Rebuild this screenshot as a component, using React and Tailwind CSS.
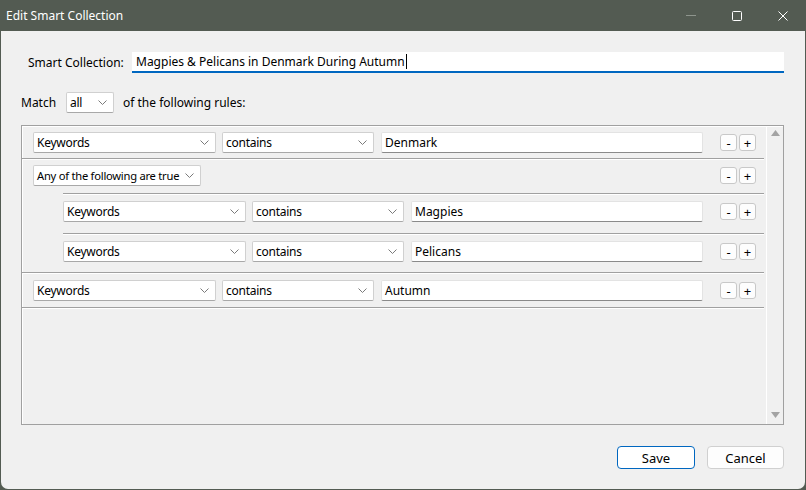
import React from 'react';

const FONT = { fontFamily: '"Noto Sans", "Open Sans", sans-serif' };

const Chevron = () => (
  <svg width="9" height="5" viewBox="0 0 9 5" className="shrink-0">
    <path d="M0.5 0.5 L4.5 4.5 L8.5 0.5" fill="none" stroke="#7a7a7a" strokeWidth="1" />
  </svg>
);

const Select = ({ value, w, small }) => (
  <div
    className="h-[21px] bg-white border border-[#d0d0d0] border-b-[#a8a8a8] rounded-[2px] flex items-center justify-between pl-[3px] pr-[6px] shrink-0"
    style={{ width: w }}
  >
    <span className={`${small ? 'text-[11.2px]' : 'text-[12px]'} text-black leading-[16px] whitespace-nowrap tracking-[-0.25px]`}>{value}</span>
    <Chevron />
  </div>
);

const TextBox = ({ value }) => (
  <div className="flex-1 h-[21px] bg-white border border-[#e3e3e3] border-b-[#8a8a8a] rounded-[2px] flex items-center pl-[3px]">
    <span className="text-[12px] text-black leading-[16px]">{value}</span>
  </div>
);

const MiniBtn = ({ label }) => (
  <div className="w-[17px] h-[17px] shrink-0 bg-[#fdfdfd] border border-[#c8c8c8] rounded-[3px] flex items-center justify-center text-[13px] leading-[16px] text-black">
    {label}
  </div>
);

const Buttons = () => (
  <div className="flex gap-[2px] ml-[17px] shrink-0">
    <MiniBtn label="-" />
    <MiniBtn label="+" />
  </div>
);

const Rule = ({ value, nested }) => (
  <div className={`flex items-center h-[21px] pr-[8px] ${nested ? '' : 'pl-[11px]'}`}>
    <Select value="Keywords" w={183} />
    <div className="ml-[6px]"><Select value="contains" w={152} /></div>
    <div className="ml-[7px] flex-1 flex"><TextBox value={value} /></div>
    <Buttons />
  </div>
);

const Sep = 'border-b border-[#a0a0a0] shadow-[0_1px_0_#ffffff]';

export default function App() {
  return (
    <div className="w-[806px] h-[490px] bg-[#535b52] flex flex-col overflow-hidden" style={FONT}>
      {/* ── Title bar ───────────────────────────── */}
      <div className="h-[31px] flex items-center shrink-0 pl-[6px]">
        <span className="text-[12px] text-white leading-[16px]">Edit Smart Collection</span>
        <div className="ml-auto flex items-center h-full">
          <div className="w-[46px] h-full flex items-center justify-center">
            <svg width="10" height="1" viewBox="0 0 10 1"><rect width="10" height="1" fill="#8e958d" /></svg>
          </div>
          <div className="w-[46px] h-full flex items-center justify-center">
            <svg width="10" height="10" viewBox="0 0 10 10">
              <rect x="0.5" y="0.5" width="9" height="9" rx="1" fill="none" stroke="#ffffff" strokeWidth="1" />
            </svg>
          </div>
          <div className="w-[46px] h-full flex items-center justify-center">
            <svg width="10" height="10" viewBox="0 0 10 10">
              <path d="M0.5 0.5 L9.5 9.5 M9.5 0.5 L0.5 9.5" stroke="#ffffff" strokeWidth="1" />
            </svg>
          </div>
        </div>
      </div>

      {/* ── Body ────────────────────────────────── */}
      <div className="flex-1 mx-[1px] mb-[1px] bg-[#f0f0f0] rounded-b-[7px] flex flex-col pl-[20px] pr-[21px]">
        <div className="flex items-center mt-[21px] h-[21px]">
          <span className="text-[12px] text-black leading-[16px] ml-[7px] w-[104px]">Smart Collection:</span>
          <div className="flex-1 h-[21px] bg-white border-b-2 border-[#0067c0] flex items-center pl-[4px]">
            <span className="text-[12px] text-black leading-[16px]">Magpies &amp; Pelicans in Denmark During Autumn</span>
            <span className="w-px h-[15px] bg-black ml-[1px]" />
          </div>
        </div>

        <div className="flex items-center mt-[19px] h-[21px]">
          <span className="text-[12px] text-black leading-[16px] w-[45px]">Match</span>
          <Select value="all" w={48} />
          <span className="text-[12px] text-black leading-[16px] ml-[9px]">of the following rules:</span>
        </div>

        {/* ── Rules panel ───────────────────────── */}
        <div className="mt-[12px] h-[300px] border border-[#a0a0a0] shadow-[inset_1px_1px_0_#ffffff] flex">
          <div className="flex-1 mr-[2px] flex flex-col">
            <div className={`pt-[6px] pb-[5px] ${Sep}`}>
              <Rule value="Denmark" />
            </div>

            <div className={Sep}>
              <div className="flex items-center h-[21px] mt-[6px] mb-[7px] pl-[11px] pr-[8px]">
                <Select value="Any of the following are true" w={168} small />
                <div className="ml-auto"><Buttons /></div>
              </div>
              <div className="ml-[41px] border-t border-[#a0a0a0] shadow-[inset_0_1px_0_#ffffff]">
                <div className={`pt-[7px] pb-[11px] ${Sep}`}>
                  <Rule value="Magpies" nested />
                </div>
                <div className="pt-[7px] pb-[10px]">
                  <Rule value="Pelicans" nested />
                </div>
              </div>
            </div>

            <div className={`pt-[7px] pb-[6px] ${Sep}`}>
              <Rule value="Autumn" />
            </div>
          </div>

          {/* scrollbar */}
          <div className="w-[17px] border-l border-white flex flex-col items-center justify-between pt-[4px] pb-[6px]">
            <svg width="9" height="6" viewBox="0 0 9 6"><path d="M0 6 L4.5 0 L9 6 Z" fill="#a3a3a3" /></svg>
            <svg width="9" height="6" viewBox="0 0 9 6"><path d="M0 0 L4.5 6 L9 0 Z" fill="#a3a3a3" /></svg>
          </div>
        </div>

        {/* ── Footer ────────────────────────────── */}
        <div className="flex justify-end mt-[21px]">
          <button className="w-[78px] h-[23px] bg-white border border-[#0067c0] rounded-[4px] text-[13px] text-black leading-[16px]">
            Save
          </button>
          <button className="ml-[12px] w-[77px] h-[23px] bg-[#fdfdfd] border border-[#d0d0d0] rounded-[4px] text-[13px] text-black leading-[16px]">
            Cancel
          </button>
        </div>
      </div>
    </div>
  );
}
